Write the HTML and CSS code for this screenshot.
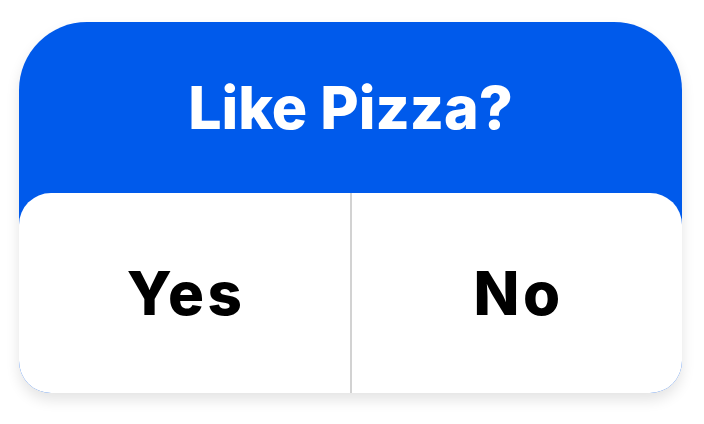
FILE: index.html
```html
<!DOCTYPE html>
<html>
<head>
<meta charset="utf-8">
<link rel="stylesheet" href="styles.css">
</head>
<body>
<div class="card">
  <div class="header"><h1 class="title">Like Pizza?</h1></div>
  <div class="answers">
    <button class="answer">Yes</button>
    <div class="divider"></div>
    <button class="answer">No</button>
  </div>
</div>
</body>
</html>
```
FILE: styles.css
```css
html, body {
  margin: 0;
  padding: 0;
  background: #ffffff;
}
body {
  width: 704px;
  height: 424px;
  padding: 22px 0 0 19px;
  box-sizing: border-box;
  font-family: "Inter", "Noto Sans", sans-serif;
}
.card {
  width: 663px;
  height: 371px;
  background: #005aeb;
  border-radius: 68px 68px 32px 32px;
  box-shadow: 0 7px 14px rgba(0, 0, 0, 0.11);
  display: flex;
  flex-direction: column;
}
.header {
  height: 171px;
  display: flex;
  align-items: center;
  justify-content: center;
}
.title {
  margin: 0;
  color: #ffffff;
  font-size: 59px;
  font-weight: 800;
  letter-spacing: 0;
  line-height: 1;
}
.answers {
  flex: 1;
  background: #ffffff;
  border-radius: 32px;
  display: flex;
}
.answer {
  flex: 1;
  border: 0;
  background: transparent;
  font-family: inherit;
  font-size: 60px;
  font-weight: 800;
  color: #000000;
  letter-spacing: 3.5px;
  text-indent: 3.5px;
  padding: 0;
}
.divider {
  width: 2px;
  background: #d2d2d2;
}
```
